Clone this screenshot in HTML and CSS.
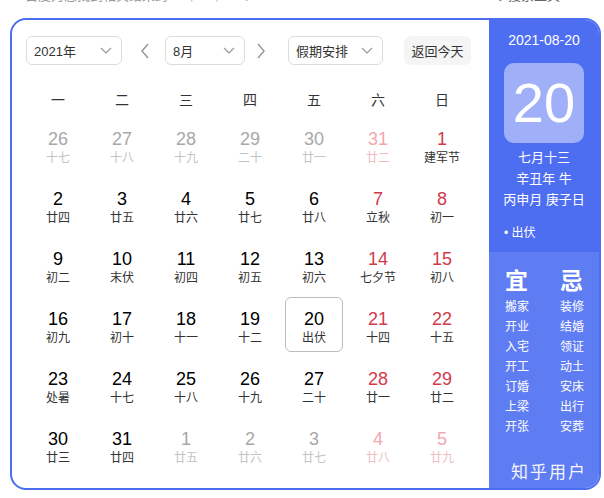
FILE: index.html
```html
<!DOCTYPE html>
<html lang="zh">
<head>
<meta charset="utf-8">
<link rel="stylesheet" href="styles.css">
</head>
<body>
<div class="topbar">
  <span class="result">百度为您找到相关结果约100,000,000个</span>
  <span class="tools"><svg width="10" height="12" viewBox="0 0 10 12"><path d="M1 1h8L6 5v6L4 10V5z" fill="none" stroke="#888" stroke-width="1"/></svg>搜索工具</span>
</div>
<div class="card">
  <div class="main">
    <div class="controls">
      <div class="select sel-year"><span>2021年</span><svg class="down" width="12" height="7" viewBox="0 0 12 7"><path d="M1 1l5 5 5-5" fill="none" stroke="#999" stroke-width="1.2"/></svg></div>
      <svg class="arrow prev" width="10" height="16" viewBox="0 0 10 16"><path d="M8 1L2 8l6 7" fill="none" stroke="#999" stroke-width="1.5"/></svg>
      <div class="select sel-month"><span>8月</span><svg class="down" width="12" height="7" viewBox="0 0 12 7"><path d="M1 1l5 5 5-5" fill="none" stroke="#999" stroke-width="1.2"/></svg></div>
      <svg class="arrow next" width="10" height="16" viewBox="0 0 10 16"><path d="M2 1l6 7-6 7" fill="none" stroke="#999" stroke-width="1.5"/></svg>
      <div class="select sel-holiday"><span>假期安排</span><svg class="down" width="12" height="7" viewBox="0 0 12 7"><path d="M1 1l5 5 5-5" fill="none" stroke="#999" stroke-width="1.2"/></svg></div>
      <div class="today-btn">返回今天</div>
    </div>
    <div class="weekdays">
      <span>一</span><span>二</span><span>三</span><span>四</span><span>五</span><span>六</span><span>日</span>
    </div>
    <div class="grid">
      <div class="cell other"><div class="day"><b>26</b><i>十七</i></div></div>
      <div class="cell other"><div class="day"><b>27</b><i>十八</i></div></div>
      <div class="cell other"><div class="day"><b>28</b><i>十九</i></div></div>
      <div class="cell other"><div class="day"><b>29</b><i>二十</i></div></div>
      <div class="cell other"><div class="day"><b>30</b><i>廿一</i></div></div>
      <div class="cell other wknd"><div class="day"><b>31</b><i>廿二</i></div></div>
      <div class="cell wknd"><div class="day"><b>1</b><i>建军节</i></div></div>

      <div class="cell"><div class="day"><b>2</b><i>廿四</i></div></div>
      <div class="cell"><div class="day"><b>3</b><i>廿五</i></div></div>
      <div class="cell"><div class="day"><b>4</b><i>廿六</i></div></div>
      <div class="cell"><div class="day"><b>5</b><i>廿七</i></div></div>
      <div class="cell"><div class="day"><b>6</b><i>廿八</i></div></div>
      <div class="cell wknd"><div class="day"><b>7</b><i>立秋</i></div></div>
      <div class="cell wknd"><div class="day"><b>8</b><i>初一</i></div></div>

      <div class="cell"><div class="day"><b>9</b><i>初二</i></div></div>
      <div class="cell"><div class="day"><b>10</b><i>末伏</i></div></div>
      <div class="cell"><div class="day"><b>11</b><i>初四</i></div></div>
      <div class="cell"><div class="day"><b>12</b><i>初五</i></div></div>
      <div class="cell"><div class="day"><b>13</b><i>初六</i></div></div>
      <div class="cell wknd"><div class="day"><b>14</b><i>七夕节</i></div></div>
      <div class="cell wknd"><div class="day"><b>15</b><i>初八</i></div></div>

      <div class="cell"><div class="day"><b>16</b><i>初九</i></div></div>
      <div class="cell"><div class="day"><b>17</b><i>初十</i></div></div>
      <div class="cell"><div class="day"><b>18</b><i>十一</i></div></div>
      <div class="cell"><div class="day"><b>19</b><i>十二</i></div></div>
      <div class="cell selected"><div class="day"><b>20</b><i>出伏</i></div></div>
      <div class="cell wknd"><div class="day"><b>21</b><i>十四</i></div></div>
      <div class="cell wknd"><div class="day"><b>22</b><i>十五</i></div></div>

      <div class="cell"><div class="day"><b>23</b><i>处暑</i></div></div>
      <div class="cell"><div class="day"><b>24</b><i>十七</i></div></div>
      <div class="cell"><div class="day"><b>25</b><i>十八</i></div></div>
      <div class="cell"><div class="day"><b>26</b><i>十九</i></div></div>
      <div class="cell"><div class="day"><b>27</b><i>二十</i></div></div>
      <div class="cell wknd"><div class="day"><b>28</b><i>廿一</i></div></div>
      <div class="cell wknd"><div class="day"><b>29</b><i>廿二</i></div></div>

      <div class="cell"><div class="day"><b>30</b><i>廿三</i></div></div>
      <div class="cell"><div class="day"><b>31</b><i>廿四</i></div></div>
      <div class="cell other"><div class="day"><b>1</b><i>廿五</i></div></div>
      <div class="cell other"><div class="day"><b>2</b><i>廿六</i></div></div>
      <div class="cell other"><div class="day"><b>3</b><i>廿七</i></div></div>
      <div class="cell other wknd"><div class="day"><b>4</b><i>廿八</i></div></div>
      <div class="cell other wknd"><div class="day"><b>5</b><i>廿九</i></div></div>
    </div>
  </div>
  <div class="side">
    <div class="side-top">
      <div class="date">2021-08-20</div>
      <div class="bigday">20</div>
      <div class="lunar">
        <div>七月十三</div>
        <div>辛丑年 牛</div>
        <div>丙申月 庚子日</div>
      </div>
      <div class="festival">• 出伏</div>
    </div>
    <div class="side-bottom">
      <div class="yiji">
        <div class="col">
          <div class="head">宜</div>
          <div>搬家</div><div>开业</div><div>入宅</div><div>开工</div><div>订婚</div><div>上梁</div><div>开张</div>
        </div>
        <div class="col">
          <div class="head">忌</div>
          <div>装修</div><div>结婚</div><div>领证</div><div>动土</div><div>安床</div><div>出行</div><div>安葬</div>
        </div>
      </div>
      <div class="mark">知乎用户</div>
    </div>
  </div>
</div>
</body>
</html>
```
FILE: styles.css
```css
* { box-sizing: border-box; }
html, body { margin: 0; padding: 0; background: #fff; }
body {
  width: 604px;
  height: 498px;
  overflow: hidden;
  font-family: "Liberation Sans", "Noto Sans CJK SC", sans-serif;
  color: #333;
}
.topbar {
  height: 5px;
  overflow: hidden;
  display: flex;
  justify-content: space-between;
  padding: 0 44px 0 25px;
  font-size: 13px;
  line-height: 18px;
}
.topbar span { margin-top: -13px; display: flex; align-items: center; gap: 3px; }
.result { color: #999; }
.tools { color: #666; }

.card {
  margin: 13px 0 0 10px;
  width: 591px;
  height: 472px;
  border: 2px solid #4e6ef2;
  border-radius: 16px;
  display: flex;
  overflow: hidden;
  background: #fff;
}
.main {
  width: 477px;
  padding: 16px 0 0 14px;
}
.controls {
  display: flex;
  align-items: center;
  height: 29px;
}
.select {
  height: 29px;
  border: 1px solid #dcdcdc;
  border-radius: 6px;
  display: flex;
  align-items: center;
  justify-content: space-between;
  padding: 0 9px 0 7px;
  font-size: 13px;
  color: #333;
}
.sel-year { width: 96px; }
.sel-month { width: 80px; }
.sel-holiday { width: 95px; }
.arrow.prev { margin: 0 15px 0 18px; }
.arrow.next { margin: 0 22px 0 11px; }
.today-btn {
  margin-left: 21px;
  height: 29px;
  width: 67px;
  border-radius: 6px;
  background: #f5f5f6;
  font-size: 13px;
  color: #333;
  display: flex;
  align-items: center;
  justify-content: center;
}
.weekdays {
  margin-top: 19px;
  display: grid;
  grid-template-columns: repeat(7, 64px);
  height: 30px;
  align-items: center;
  font-size: 14px;
  color: #333;
  text-align: center;
}
.grid {
  display: grid;
  grid-template-columns: repeat(7, 64px);
  grid-auto-rows: 60px;
}
.cell {
  display: flex;
  align-items: center;
  justify-content: center;
}
.day {
  width: 58px;
  height: 55px;
  border: 1.5px solid transparent;
  border-radius: 6px;
  display: flex;
  flex-direction: column;
  align-items: center;
  padding-top: 10px;
}
.day b {
  font-weight: normal;
  font-size: 18px;
  line-height: 22px;
  color: #000;
}
.day i {
  font-style: normal;
  font-size: 12px;
  line-height: 16px;
  color: #333;
}
.wknd .day b { color: #d23a4b; }
.other .day b { color: #a8a8a8; }
.other .day i { color: #c4c4c4; }
.other.wknd .day b { color: #f0a7ae; }
.other.wknd .day i { color: #efbcc1; }
.selected .day { border-color: #bdbdbd; }

.side {
  flex: 1;
  display: flex;
  flex-direction: column;
  color: #fff;
}
.side-top {
  background: #4e6ef2;
  height: 232px;
  display: flex;
  flex-direction: column;
  align-items: center;
  padding-top: 12px;
}
.date { font-size: 14px; line-height: 16px; }
.bigday {
  margin-top: 15px;
  width: 80px;
  height: 80px;
  border-radius: 10px;
  background: rgba(255, 255, 255, 0.46);
  font-size: 56px;
  line-height: 80px;
  text-align: center;
}
.lunar {
  margin-top: 4px;
  font-size: 13px;
  line-height: 21px;
  text-align: center;
}
.festival {
  align-self: flex-start;
  margin: 15px 0 0 15px;
  font-size: 12px;
  line-height: 16px;
}
.side-bottom {
  flex: 1;
  background: #5f7df3;
  display: flex;
  flex-direction: column;
  padding: 16px 0 0 16px;
}
.yiji { display: flex; gap: 31px; }
.col { font-size: 12px; line-height: 20px; }
.col .head {
  font-size: 23px;
  line-height: 26px;
  margin-bottom: 3px;
  font-weight: bold;
}
.mark {
  margin-top: auto;
  margin-bottom: 4px;
  margin-left: 6px;
  font-size: 17px;
  letter-spacing: 2px;
  line-height: 22px;
  color: rgba(255, 255, 255, 0.95);
}
```
